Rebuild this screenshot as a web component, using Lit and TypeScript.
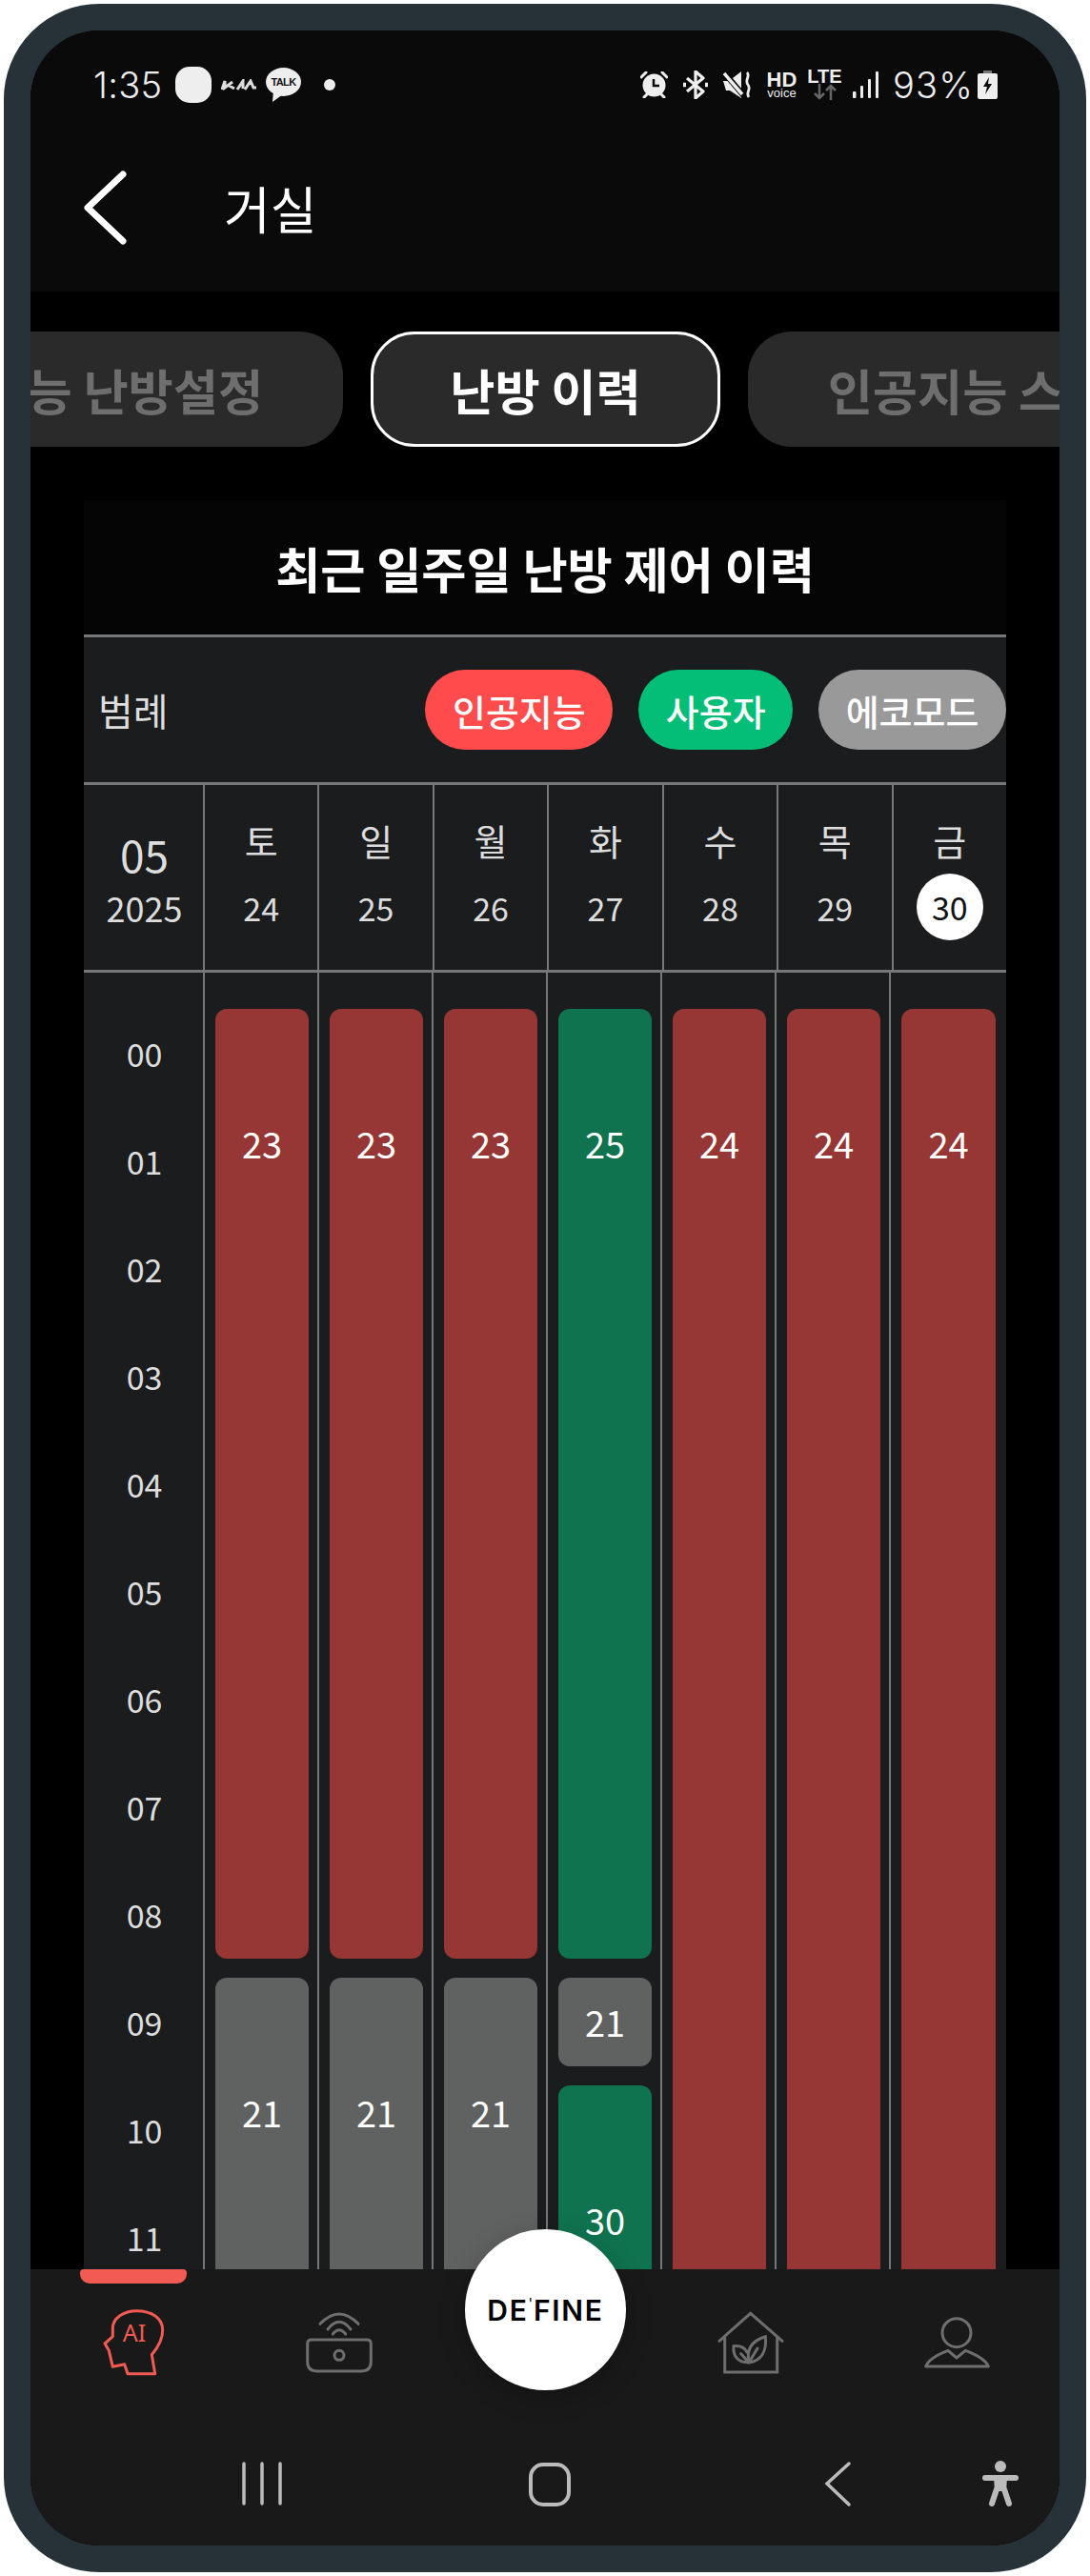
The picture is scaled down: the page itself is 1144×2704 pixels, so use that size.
import { LitElement, html, css } from 'lit';
import { customElement } from 'lit/decorators.js';

type Kind = 'ai' | 'user' | 'eco';
type Segment = { kind: Kind; hours: number; label: string };

const SLOT = 113;
const GAP = 20;

const aiDay = (temp: string, rest: string): Segment[] => [
  { kind: 'ai', hours: 9, label: temp },
  { kind: 'eco', hours: 6, label: rest },
];

const DAYS: { name: string; date: string; today?: boolean; segments: Segment[] }[] = [
  { name: '토', date: '24', segments: aiDay('23', '21') },
  { name: '일', date: '25', segments: aiDay('23', '21') },
  { name: '월', date: '26', segments: aiDay('23', '21') },
  {
    name: '화',
    date: '27',
    segments: [
      { kind: 'user', hours: 9, label: '25' },
      { kind: 'eco', hours: 1, label: '21' },
      { kind: 'user', hours: 6, label: '30' },
    ],
  },
  { name: '수', date: '28', segments: [{ kind: 'ai', hours: 15, label: '24' }] },
  { name: '목', date: '29', segments: [{ kind: 'ai', hours: 15, label: '24' }] },
  { name: '금', date: '30', today: true, segments: [{ kind: 'ai', hours: 15, label: '24' }] },
];

const HOURS = ['00', '01', '02', '03', '04', '05', '06', '07', '08', '09', '10', '11'];

@customElement('app-root')
export class AppRoot extends LitElement {
  static styles = css`
    :host {
      display: block;
      padding: 4px;
      background: #fff;
      font-family: 'Noto Sans CJK KR', 'Noto Sans', sans-serif;
    }

    .frame {
      box-sizing: border-box;
      width: 1136px;
      height: 2696px;
      border: 28px solid #263238;
      border-radius: 100px;
      background: #263238;
    }

    .screen {
      display: flex;
      flex-direction: column;
      height: 100%;
      border-radius: 72px;
      overflow: hidden;
      background: #000;
    }

    .top {
      flex: none;
      height: 274px;
      background: #0a0a0a;
    }

    .status {
      display: flex;
      align-items: center;
      height: 114px;
      padding: 0 66px;
      color: #eee;
      font-family: Inter, Roboto, 'Noto Sans', sans-serif;
      font-weight: 350;
      font-size: 38px;
      line-height: 1;
    }

    .status svg {
      display: block;
      flex: none;
    }

    .clock {
      width: 72px;
      margin-right: 14px;
      letter-spacing: 0.3px;
      white-space: nowrap;
    }

    .squircle {
      width: 38px;
      height: 38px;
      border-radius: 15px;
      background: #eee;
      margin-right: 10px;
    }

    .kia {
      margin-right: 10px;
    }

    .talk {
      position: relative;
      width: 37px;
      height: 36px;
      margin-right: 24px;
    }

    .talk span {
      position: absolute;
      left: 0;
      right: 0;
      top: 9px;
      text-align: center;
      color: #111;
      font-family: 'Liberation Sans', sans-serif;
      font-weight: 700;
      font-size: 11px;
      line-height: 12px;
      letter-spacing: -0.6px;
    }

    .dot {
      width: 12px;
      height: 12px;
      border-radius: 50%;
      background: #eee;
    }

    .right {
      display: flex;
      align-items: center;
      margin-left: auto;
      margin-right: -1px;
    }

    .hd,
    .lte {
      display: flex;
      flex-direction: column;
      align-items: center;
      font-family: 'Liberation Sans', sans-serif;
      font-weight: 700;
    }

    .hd {
      width: 33px;
      margin: 0 12px 0 16px;
      font-size: 22px;
      line-height: 17px;
    }

    .hd small {
      font-size: 13px;
      line-height: 11px;
      font-weight: 400;
    }

    .lte {
      width: 33px;
      margin: -2px 13px 0 0;
      font-size: 20px;
      line-height: 16px;
    }

    .pct {
      width: 82px;
      margin: 0 7px 0 15px;
      font-size: 38px;
      white-space: nowrap;
      letter-spacing: 1.2px;
    }

    .appbar {
      display: flex;
      align-items: center;
      gap: 101px;
      height: 144px;
      padding-left: 56px;
      color: #fff;
      font-size: 53px;
      font-weight: 400;
    }

    .tabs {
      flex: none;
      display: flex;
      gap: 29px;
      margin-top: 42px;
      height: 121px;
      overflow: hidden;
    }

    .tab {
      flex: none;
      box-sizing: border-box;
      display: flex;
      align-items: center;
      height: 121px;
      padding: 0 84px;
      border-radius: 46px;
      background: #2a2a2a;
      color: #6e6e6e;
      font-size: 51.3px;
      font-weight: 700;
      white-space: nowrap;
    }

    .tab.first {
      margin-left: -229px;
    }

    .tab.active {
      padding: 0 80px;
      border: 3px solid #fff;
      color: #fff;
    }

    .content {
      flex: 1;
      min-height: 0;
      margin: 56px 56px 0;
      overflow: hidden;
      background: #1b1c1e;
    }

    .title {
      height: 141px;
      display: flex;
      align-items: center;
      justify-content: center;
      background: #050505;
      color: #fff;
      font-size: 51.3px;
      font-weight: 700;
      border-bottom: 3px solid #777;
    }

    .legend {
      box-sizing: border-box;
      display: flex;
      align-items: center;
      gap: 27px;
      height: 155px;
      padding-left: 15px;
      color: #ddd;
      font-size: 38px;
      border-bottom: 3px solid #777;
    }

    .legend .name {
      margin-right: auto;
      font-size: 40px;
      font-weight: 400;
    }

    .pill {
      display: flex;
      align-items: center;
      height: 84px;
      padding: 0 28.5px;
      border-radius: 42px;
      color: #fff;
      font-weight: 500;
    }

    .pill.ai {
      background: #ff4b4b;
    }

    .pill.user {
      background: #04bd77;
    }

    .pill.eco {
      background: #999;
    }

    .head {
      display: grid;
      grid-template-columns: 125px repeat(7, 1fr);
      height: 194px;
      border-bottom: 3px solid #777;
      color: #ddd;
    }

    .month {
      display: flex;
      flex-direction: column;
      align-items: center;
      justify-content: center;
      padding-top: 2px;
      padding-left: 2px;
      font-size: 36px;
      line-height: 52px;
    }

    .month b {
      font-weight: 400;
      font-size: 46px;
      line-height: 60px;
    }

    .day {
      display: flex;
      flex-direction: column;
      align-items: center;
      border-left: 2px solid #777;
      padding-top: 31px;
      font-size: 38px;
      line-height: 54px;
    }

    .day span {
      display: flex;
      align-items: center;
      justify-content: center;
      width: 70px;
      height: 70px;
      margin-top: 9px;
      font-size: 34px;
      line-height: 1;
    }

    .day .today {
      border-radius: 50%;
      background: #fff;
      color: #111;
      margin-top: 8px;
    }

    .body {
      display: grid;
      grid-template-columns: 125px repeat(6, 120px) 1fr;
    }

    .hours {
      padding: 28px 0 0 2px;
      color: #ddd;
      font-size: 34px;
    }

    .hours div {
      display: flex;
      align-items: center;
      justify-content: center;
      height: 113px;
    }

    .col {
      border-left: 2px solid #777;
      padding: 38px 9px 0 11px;
    }

    .col:last-child {
      padding-right: 11px;
    }

    .bar {
      box-sizing: border-box;
      display: flex;
      justify-content: center;
      align-items: center;
      margin-bottom: 20px;
      padding-bottom: 2px;
      border-radius: 12px;
      color: #fff;
      font-size: 38px;
    }

    .bar.tall {
      align-items: flex-start;
      padding-top: 113px;
    }

    .bar.ai {
      background: #963635;
    }

    .bar.user {
      background: #10734f;
    }

    .bar.eco {
      background: #606261;
    }

    .nav {
      position: relative;
      flex: none;
      height: 290px;
      background: #191919;
    }

    .items {
      display: grid;
      grid-template-columns: repeat(5, 216px);
      height: 154px;
    }

    .item {
      display: flex;
      flex-direction: column;
      align-items: center;
    }

    .bar-on {
      width: 112px;
      height: 15px;
      border-radius: 4px 4px 10px 10px;
      margin-bottom: 27px;
    }

    .item.on .bar-on {
      background: #f15b53;
    }

    .fab {
      position: absolute;
      left: 456px;
      top: -42px;
      width: 169px;
      height: 169px;
      border-radius: 50%;
      background: #fff;
      box-shadow: 0 8px 28px rgba(0, 0, 0, 0.22);
      display: flex;
      align-items: center;
      justify-content: center;
      color: #000;
      font-family: Inter, 'Liberation Sans', sans-serif;
      font-weight: 600;
      font-size: 30px;
      letter-spacing: 1.7px;
    }

    .fab i {
      font-style: normal;
      font-weight: 400;
      font-size: 15px;
      letter-spacing: 0;
      margin: -14px 1px 0 0;
    }

    .sys {
      display: flex;
      padding: 47px 0 0 218px;
      gap: 252px;
    }

    .sys svg:last-child {
      margin-left: -131px;
    }
  `;

  private renderStatus() {
    return html`
      <div class="status">
        <span class="clock">1:35</span>
        <div class="squircle"></div>
        <svg class="kia" width="37" height="12" viewBox="0 0 37 12" fill="none" stroke="#ddd" stroke-width="3">
          <path d="M1 11 4 2V9L12 3M7 6 14 10M17 11 23 2V10M25 11 31 2 34 9H37" />
        </svg>
        <div class="talk">
          <svg width="37" height="36" viewBox="0 0 37 36">
            <ellipse cx="18.500" cy="15" rx="18.500" ry="15" fill="#eee" />
            <path d="M8 24 7 36 18 28Z" fill="#eee" />
          </svg>
          <span>TALK</span>
        </div>
        <div class="dot"></div>
        <div class="right">
          <svg width="29" height="28" viewBox="0 0 29 28" style="margin-right:16px">
            <circle cx="14.500" cy="14.500" r="12" fill="#eee" />
            <path d="M14 8V15H20" fill="none" stroke="#0a0a0a" stroke-width="2.500" />
            <path d="M1 6 6 1M28 6 23 1M4 27 7 24M25 27 22 24" stroke="#eee" stroke-width="3" stroke-linecap="round" />
          </svg>
          <svg width="26" height="30" viewBox="0 0 26 30" fill="none" stroke="#eee" stroke-width="3.200" style="margin-right:16px">
            <path d="M4 8 21 22 13 29V1L21 8 4 22" stroke-linejoin="round" />
            <path d="M0 15H3M23 15H26" stroke-width="4.500" />
          </svg>
          <svg width="29" height="28" viewBox="0 0 29 28">
            <path d="M0 10H6L19 0V28L7 20H3Z" fill="#eee" />
            <path d="M0 0 22 26" stroke="#0a0a0a" stroke-width="6" />
            <path d="M1 2 20 24" stroke="#eee" stroke-width="3.500" />
            <path d="M25 1C29 5 22 9 26 14C30 19 23 22 27 27" fill="none" stroke="#eee" stroke-width="2.800" />
          </svg>
          <div class="hd">HD<small>voice</small></div>
          <div class="lte">
            LTE
            <svg width="26" height="17" viewBox="0 0 26 17" fill="none" stroke="#666" stroke-width="2.500">
              <path d="M7 0V15M2 10 7 15 12 10M19 17V2M14 7 19 2 24 7" />
            </svg>
          </div>
          <svg width="27" height="28" viewBox="0 0 27 28" fill="#eee">
            <rect x="0" y="21" width="3.500" height="7" rx="1" />
            <rect x="8" y="15" width="3" height="13" rx="1" />
            <rect x="16" y="8" width="3" height="20" rx="1" />
            <rect x="24" y="0" width="3" height="28" rx="1" />
          </svg>
          <span class="pct">93%</span>
          <svg width="21" height="30" viewBox="0 0 21 30">
            <path d="M6 0H15V3H6Z" fill="#777" />
            <rect x="0" y="3" width="21" height="27" rx="2" fill="#eee" />
            <path d="M12 7 6 17H10L8 25 15 14H11Z" fill="#0a0a0a" />
          </svg>
        </div>
      </div>
    `;
  }

  private renderHead() {
    return html`
      <div class="head">
        <div class="month"><b>05</b>2025</div>
        ${DAYS.map(
          (d) => html`<div class="day">${d.name}<span class=${d.today ? 'today' : ''}>${d.date}</span></div>`
        )}
      </div>
    `;
  }

  private renderBody() {
    return html`
      <div class="body">
        <div class="hours">${HOURS.map((h) => html`<div>${h}</div>`)}</div>
        ${DAYS.map(
          (d) => html`
            <div class="col">
              ${d.segments.map(
                (s) => html`
                  <div
                    class="bar ${s.kind} ${s.hours > 1 ? 'tall' : ''}"
                    style="height:${s.hours * SLOT - GAP}px"
                  >
                    <span>${s.label}</span>
                  </div>
                `
              )}
            </div>
          `
        )}
      </div>
    `;
  }

  private renderNav() {
    return html`
      <div class="nav">
        <div class="items">
          <div class="item on">
            <div class="bar-on"></div>
            <svg width="70" height="70" viewBox="0 0 70 70" fill="none" stroke="#f15b53" stroke-width="3" stroke-linejoin="round">
              <path d="M57.700 67.700H29L25.700 57.700 13.300 60.300 9.300 43.300 5 36 13.300 28.700V20C13.300 9 25 1.700 38.300 1.700 54 1.700 65.700 9 65.700 22 65.700 33 60 41 54.300 47.700Z" />
              <text x="36" y="34" text-anchor="middle" fill="#f15b53" stroke="none" font-size="25" font-family="Noto Sans">AI</text>
            </svg>
          </div>
          <div class="item">
            <div class="bar-on"></div>
            <svg width="70" height="70" viewBox="0 0 70 70" fill="none" stroke="#6e6e6e" stroke-width="3" stroke-linecap="round">
              <path d="M15 15.300Q35 -5.300 55 15.300M23 21Q35 5.600 47 21M28.300 26Q35 17.400 41.700 26" />
              <path d="M6 32H64Q68.300 32 68.300 36V55Q68.300 65 58 65H12Q1.700 65 1.700 55V36Q1.700 32 6 32Z" />
              <circle cx="35" cy="48.300" r="5" />
            </svg>
          </div>
          <div class="item"></div>
          <div class="item">
            <div class="bar-on"></div>
            <svg width="70" height="70" viewBox="0 0 70 70" fill="none" stroke="#6e6e6e" stroke-width="3" stroke-linecap="round">
              <path d="M2 33.300 34.700 4.300 68 33.300M7.700 29.300V66H62.700V29.300" />
              <path d="M33 56C30 42 36 33 50.300 28.700 52 44 46 54 33 56ZM33 56C22 56 16 50 17 38.700 24 38 29 41 31 45M33 56 42 41M24.700 46.700 33 56" />
            </svg>
          </div>
          <div class="item">
            <div class="bar-on"></div>
            <svg width="70" height="70" viewBox="0 0 70 70" fill="none" stroke="#6e6e6e" stroke-width="3" stroke-linejoin="round">
              <circle cx="35" cy="24.700" r="15" />
              <path d="M2.700 60H68.300C66 53 55 47.500 44.300 43.300L35 51 26 43.300C15 47.500 5 53 2.700 60Z" />
            </svg>
          </div>
        </div>
        <div class="fab">DE<i>'</i>FINE</div>
        <div class="sys">
          <svg width="50" height="50" viewBox="0 0 50 50" stroke="#bbb" stroke-width="3.500" stroke-linecap="round">
            <path d="M6 3V45M25 3V45M44 3V45" />
          </svg>
          <svg width="50" height="50" viewBox="0 0 50 50" fill="none" stroke="#bbb" stroke-width="4">
            <rect x="5" y="4" width="40" height="42" rx="13" />
          </svg>
          <svg width="50" height="50" viewBox="0 0 50 50" fill="none" stroke="#bbb" stroke-width="3.500" stroke-linecap="round">
            <path d="M37 3 14 24 37 46" />
          </svg>
          <svg width="50" height="50" viewBox="0 0 50 50" fill="#bbb" stroke="#bbb" stroke-linecap="round">
            <circle cx="25" cy="6" r="6" stroke="none" />
            <path d="M9 18H41" stroke-width="6" />
            <path d="M18 18H32L31 32H19Z" stroke="none" />
            <path d="M21 30 16 45M29 30 34 45" stroke-width="6" />
          </svg>
        </div>
      </div>
    `;
  }

  render() {
    return html`
      <div class="frame">
        <div class="screen">
          <div class="top">
            ${this.renderStatus()}
            <div class="appbar">
              <svg width="46" height="78" viewBox="0 0 46 78" fill="none" stroke="#fff" stroke-width="7" stroke-linecap="round" stroke-linejoin="round">
                <path d="M41 4 4 39 41 74" />
              </svg>
              <span>거실</span>
            </div>
          </div>
          <div class="tabs">
            <div class="tab first">인공지능 난방설정</div>
            <div class="tab active">난방 이력</div>
            <div class="tab">인공지능 스케줄</div>
          </div>
          <div class="content">
            <div class="title">최근 일주일 난방 제어 이력</div>
            <div class="legend">
              <span class="name">범례</span>
              <span class="pill ai">인공지능</span>
              <span class="pill user">사용자</span>
              <span class="pill eco">에코모드</span>
            </div>
            ${this.renderHead()} ${this.renderBody()}
          </div>
          ${this.renderNav()}
        </div>
      </div>
    `;
  }
}
